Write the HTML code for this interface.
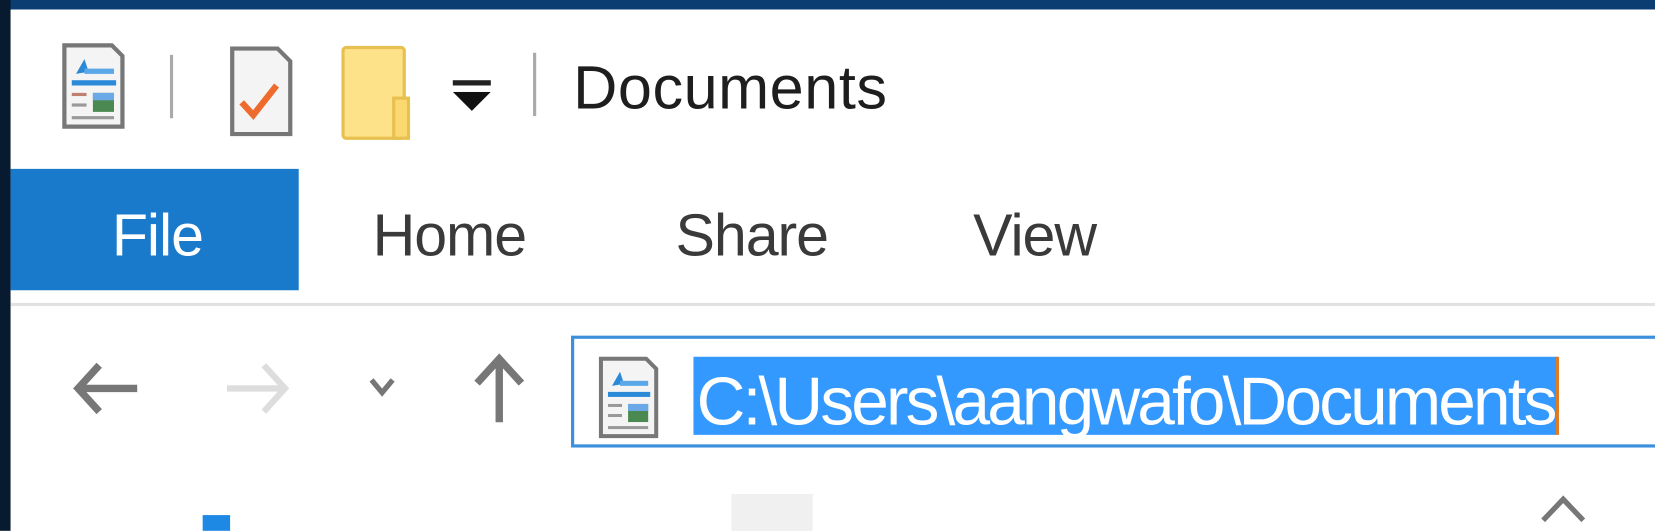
<!DOCTYPE html>
<html style="overflow:hidden;width:1655px;height:531px"><head><style>
body{margin:0;width:1655px;height:531px;overflow:hidden;background:#fff;position:relative;font-family:"Segoe UI","Liberation Sans",sans-serif}
#w{position:absolute;left:0;top:0;width:1568px;height:503px;overflow:hidden;transform:scale(1.0555);transform-origin:0 0}
.a{position:absolute}
.t{font-size:58px;line-height:1;color:#1e1e1e;letter-spacing:0.5px;top:55px}
.tab{font-size:56px;line-height:1;color:#3a3a3a;top:195px;letter-spacing:-1px}
</style></head><body><div id="w">
<div class="a" style="left:0;top:0;width:1568px;height:9px;background:#0b3d73"></div>
<div class="a" style="left:0;top:0;width:10px;height:503px;background:#081a30"></div>

<svg class="a" style="left:58px;top:40px" width="62" height="84" viewBox="0 0 62 84">
<path d="M3 3H48L58 13V80H3Z" fill="#f4f4f4" stroke="#777" stroke-width="4"/>
<path d="M14 30L22 16 26 28Z" fill="#2a8ad8"/>
<rect x="22" y="25" width="28" height="5" fill="#5aa8e8"/>
<rect x="10" y="36" width="42" height="5" fill="#2a8ad8"/>
<rect x="10" y="48" width="14" height="3" fill="#c08070"/>
<rect x="10" y="58" width="14" height="3" fill="#999"/>
<rect x="30" y="48" width="20" height="18" fill="#4a8a50"/>
<rect x="30" y="48" width="20" height="7" fill="#6aa8e8"/>
<rect x="10" y="70" width="40" height="3" fill="#999"/>
</svg>
<div class="a" style="left:161px;top:52px;width:3px;height:60px;background:#aaa"></div>
<svg class="a" style="left:217px;top:43px" width="62" height="88" viewBox="0 0 62 88">
<path d="M3 3H46L58 15V84H3Z" fill="#f4f4f4" stroke="#777" stroke-width="4"/>
<path d="M12 54L23 66 45 38" fill="none" stroke="#ee6b2e" stroke-width="6"/>
</svg>
<svg class="a" style="left:321px;top:43px" width="70" height="90" viewBox="0 0 70 90">
<rect x="4" y="2" width="58" height="86" rx="3" fill="#fde28a" stroke="#e8c050" stroke-width="3"/>
<rect x="52" y="50" width="14" height="38" fill="#fcd870" stroke="#e8c050" stroke-width="3"/>
</svg>
<div class="a" style="left:429px;top:76px;width:36px;height:5px;background:#222"></div>
<svg class="a" style="left:429px;top:87px" width="36" height="20"><path d="M0 0H36L18 18Z" fill="#111"/></svg>
<div class="a" style="left:505px;top:50px;width:3px;height:60px;background:#aaa"></div>
<div class="a t" style="left:543px">Documents</div>

<div class="a" style="left:10px;top:160px;width:273px;height:115px;background:#1979ca"></div>
<div class="a tab" style="left:106px;color:#fff">File</div>
<div class="a tab" style="left:353px">Home</div>
<div class="a tab" style="left:640px">Share</div>
<div class="a tab" style="left:922px">View</div>
<div class="a" style="left:10px;top:287px;width:1558px;height:3px;background:#e2e2e2"></div>

<svg class="a" style="left:60px;top:330px" width="460" height="80" viewBox="0 0 460 80">
<path d="M70 38H14M34 16L14 38 34 60" fill="none" stroke="#777" stroke-width="7"/>
<path d="M155 38H210M190 16L210 38 190 60" fill="none" stroke="#ddd" stroke-width="6"/>
<path d="M292 30L302 42 312 30" fill="none" stroke="#777" stroke-width="5"/>
<path d="M413 70V10M392 33L413 10 434 33" fill="none" stroke="#777" stroke-width="7"/>
</svg>
<div class="a" style="left:541px;top:318px;width:1040px;height:106px;border:3px solid #3c8fdd;box-sizing:border-box"></div>
<svg class="a" style="left:565px;top:337px" width="62" height="80" viewBox="0 0 62 84">
<path d="M3 3H48L58 13V80H3Z" fill="#f4f4f4" stroke="#777" stroke-width="4"/>
<path d="M14 30L22 16 26 28Z" fill="#2a8ad8"/>
<rect x="22" y="25" width="28" height="5" fill="#5aa8e8"/>
<rect x="10" y="36" width="42" height="5" fill="#2a8ad8"/>
<rect x="10" y="48" width="14" height="3" fill="#999"/>
<rect x="10" y="58" width="14" height="3" fill="#999"/>
<rect x="30" y="48" width="20" height="18" fill="#4a8a50"/>
<rect x="30" y="48" width="20" height="7" fill="#6aa8e8"/>
<rect x="10" y="70" width="40" height="3" fill="#999"/>
</svg>
<div class="a" style="left:657px;top:338px;width:818px;height:74px;background:#3399ff"></div>
<div class="a" style="left:1474px;top:338px;width:3px;height:74px;background:#e07a20"></div>
<div class="a" style="left:660px;top:348px;font-size:64px;line-height:1;color:#fff;white-space:nowrap;letter-spacing:-2.7px">C:\Users\aangwafo\Documents</div>

<div class="a" style="left:192px;top:488px;width:26px;height:15px;background:#1e88e5"></div>
<div class="a" style="left:693px;top:468px;width:77px;height:35px;background:#f0f0f0"></div>
<svg class="a" style="left:1458px;top:465px" width="46" height="34"><path d="M4 28L23 8 42 28" fill="none" stroke="#777" stroke-width="5"/></svg>
</div></body></html>
